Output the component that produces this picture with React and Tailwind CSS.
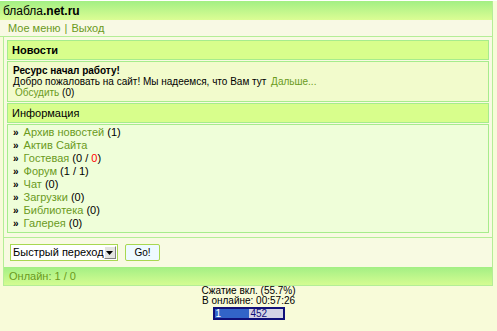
const links = [
  { name: 'Архив новостей', tail: '(1)' },
  { name: 'Актив Сайта' },
  { name: 'Гостевая', guest: true },
  { name: 'Форум', tail: '(1 / 1)' },
  { name: 'Чат', tail: '(0)' },
  { name: 'Загрузки', tail: '(0)' },
  { name: 'Библиотека', tail: '(0)' },
  { name: 'Галерея', tail: '(0)' },
];

function BoxHead({ children, bold }) {
  return (
    <div className={`h-[20px] border border-[#a6ec8c] bg-[#d8fe8c] px-[4px] flex items-center text-black ${bold ? 'font-bold text-[11px]' : 'text-[11px]'}`}>
      {children}
    </div>
  );
}

export default function App() {
  return (
    <div className="min-h-screen bg-[#f8fbd9] text-[10px] text-black" style={{ fontFamily: '"Liberation Sans", Arial, sans-serif' }}>
      <div className="w-[493px] border-r border-[#b4ee96]">
        {/* header */}
        <div className="h-[19px] mt-[1px] bg-gradient-to-b from-[#a2ef84] to-[#dbfd94] flex items-center px-[3px] text-[12px]">
          блабла<b>.net.ru</b>
        </div>
        <div className="h-[17px] bg-[#f8f9e4] flex items-center px-[8px] text-[11px] border-b border-[#b4ee96]">
          <a className="text-[#6a9a1c]">Мое меню</a>
          <span className="mx-[4px] text-[#6a9a1c]">|</span>
          <a className="text-[#6a9a1c]">Выход</a>
        </div>

        <div className="ml-[3px] border-l border-[#b4ee96] bg-[#f8fae2]">
          <div className="px-[3px] pt-[3px] pb-[4px] flex flex-col gap-[1px] border-b border-[#b4ee96]">
            <BoxHead bold>Новости</BoxHead>
            <div className="border border-[#a6ec8c] bg-[#f2fbcc] px-[5px] pt-[3px] pb-[3px] leading-[11px]">
              <div className="font-bold">Ресурс начал работу!</div>
              <div>
                Добро пожаловать на сайт! Мы надеемся, что Вам тут{' '}
                <a className="text-[#6a9a1c] ml-[2px]">Дальше...</a>
              </div>
              <div className="pl-[2px]">
                <a className="text-[#6a9a1c]">Обсудить</a> (0)
              </div>
            </div>
            <BoxHead>Информация</BoxHead>
            <div className="border border-[#a6ec8c] bg-[#effed9] px-[5px] pt-[1px] pb-[2px] text-[11px] leading-[13px]">
              {links.map((l) => (
                <div key={l.name}>
                  <span className="text-[10px] font-bold mr-[5px]">»</span>
                  <a className="text-[#6a9a1c]">{l.name}</a>
                  {l.guest && (
                    <>
                      {' '}(0 / <span className="text-[#f00]">0</span>)
                    </>
                  )}
                  {l.tail && <> {l.tail}</>}
                </div>
              ))}
            </div>
          </div>

          <div className="h-[29px] flex items-center gap-[7px] px-[6px]">
            <div className="h-[17px] w-[108px] border border-[#a8d850] bg-white flex items-center justify-between pl-[2px] pr-[1px] text-[11px] whitespace-nowrap">
              <span>Быстрый переход</span>
              <span className="w-[16px] h-[13px] bg-[#e4e4e0] border border-t-white border-l-white border-r-[#808080] border-b-[#808080] flex items-center justify-center">
                <svg width="7" height="4" viewBox="0 0 7 4"><path d="M0 0h7L3.5 4z" fill="#000" /></svg>
              </span>
            </div>
            <div className="h-[17px] w-[35px] border border-[#a8d850] bg-[#eefaff] rounded-[2px] flex items-center justify-center text-[10px]">
              Go!
            </div>
          </div>

          <div className="h-[19px] bg-gradient-to-b from-[#a2ef84] to-[#d4fc92] flex items-center px-[5px] text-[11px] text-[#6a9a1c] border-b border-[#b4ee96]">
            Онлайн: 1 / 0
          </div>
        </div>
      </div>

      <div className="flex flex-col items-center leading-[10px] text-[10px]">
        <div>Сжатие вкл. (55.7%)</div>
        <div>В онлайне: 00:57:26</div>
        <div className="mt-[1px] w-[72px] h-[13px] border-2 border-[#10107a] bg-[#d4d4e6] flex text-[10px] leading-[9px]">
          <div className="w-[34px] bg-[#3264c8] text-white pl-[1px]">1</div>
          <div className="text-[#10107a] pl-[2px]">452</div>
        </div>
      </div>
    </div>
  );
}
